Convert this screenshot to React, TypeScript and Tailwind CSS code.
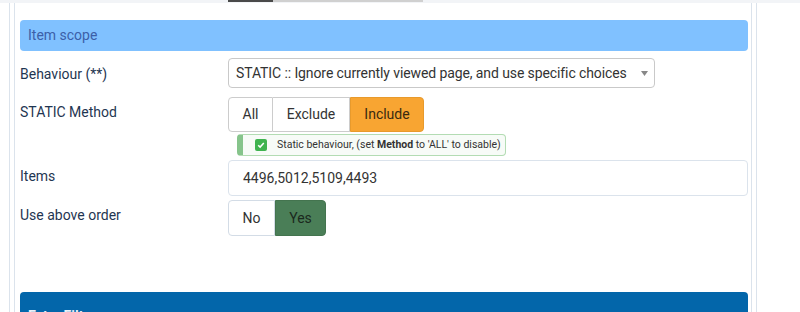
import React from 'react';

function Label({ children, className = '' }: { children: React.ReactNode; className?: string }) {
    return <div className={`text-[14px] text-[#1f3652] ${className}`}>{children}</div>;
}

export default function App() {
    return (
        <div className="w-[800px] h-[312px] overflow-hidden bg-white font-['Roboto',sans-serif]">
            {/* tail of the previous section */}
            <div className="h-[3px] bg-[#f2f4f7] flex pl-[228px]">
                <div className="w-[45px] h-[2px] bg-[#4a4a4a]" />
                <div className="w-[150px] h-[2px] bg-[#d0d0d0]" />
            </div>

            <div className="ml-[9px] w-[748px] h-[309px] border-x border-[#dbe3ec] px-[4px]">
                <div className="h-full border-x border-[#dbe3ec] pl-[5px] pr-[3px] pt-[17px]">
                    <div className="h-[31px] rounded-[4px] bg-[#80c1ff] pl-[8px] flex items-center text-[14px] text-[#3c5fa8]">
                        Item scope
                    </div>

                    <div className="grid grid-cols-[208px_1fr] mt-[7px]">
                        <Label className="pt-[6px]">Behaviour (**)</Label>
                        <div className="w-[427px] h-[30px] border border-[#c9c9c9] rounded-[4px] flex items-center justify-between pl-[7px] pr-[6px] text-[14px] text-[#333]">
                            <span className="whitespace-nowrap tracking-[-0.1px]">STATIC :: Ignore currently viewed page, and use specific choices</span>
                            <svg width="7" height="5" viewBox="0 0 7 5"><path d="M0 0h7L3.5 5z" fill="#888" /></svg>
                        </div>

                        <Label className="pt-[5px] mt-[9px]">STATIC Method</Label>
                        <div className="mt-[9px]">
                            <div className="flex h-[35px] text-[14px] text-[#333]">
                                <div className="w-[45px] flex items-center justify-center border border-[#cccccc] rounded-l-[4px]">All</div>
                                <div className="w-[77px] flex items-center justify-center border-y border-r border-[#cccccc]">Exclude</div>
                                <div className="w-[74px] flex items-center justify-center bg-[#f8a532] border border-[#e89a2c] rounded-r-[4px] text-[#3a2a10]">Include</div>
                            </div>
                            <div className="ml-[9px] mt-[2px] w-[269px] h-[22px] flex items-center rounded-[4px] border border-[#b3dcb3] border-l-[6px] border-l-[#86c48b] bg-[#f7fbf7] text-[10.5px] text-[#333] whitespace-nowrap">
                                <span className="ml-[12px] mr-[10px] w-[12px] h-[12px] shrink-0 rounded-[2px] bg-[#3fb34f] flex items-center justify-center">
                                    <svg width="8" height="8" viewBox="0 0 8 8"><path d="M1.2 4.2l1.9 1.9L6.8 2" stroke="#fff" strokeWidth="1.5" fill="none" /></svg>
                                </span>
                                <span>Static behaviour, (set <b>Method</b> to 'ALL' to disable)</span>
                            </div>
                        </div>

                        <Label className="pt-[6px] mt-[4px]">Items</Label>
                        <div className="mt-[4px] h-[36px] border border-[#dbe3ec] rounded-[4px] flex items-center pl-[14px] text-[14px] text-[#333]">
                            4496,5012,5109,4493
                        </div>

                        <Label className="pt-[5px] mt-[4px]">Use above order</Label>
                        <div className="mt-[4px] flex h-[36px] text-[14px]">
                            <div className="w-[47px] flex items-center justify-center border border-[#d3dce6] rounded-l-[4px] text-[#333]">No</div>
                            <div className="w-[51px] flex items-center justify-center bg-[#4a7e57] border border-[#44744f] rounded-r-[4px] text-[#1b2a1e]">Yes</div>
                        </div>
                    </div>

                    <div className="mt-[56px] h-[40px] rounded-t-[4px] bg-[#0366aa] pl-[8px] pt-[14px] text-[14px] font-bold leading-[20px] text-[#e8f0f8]">
                        Extra Filters
                    </div>
                </div>
            </div>
        </div>
    );
}
